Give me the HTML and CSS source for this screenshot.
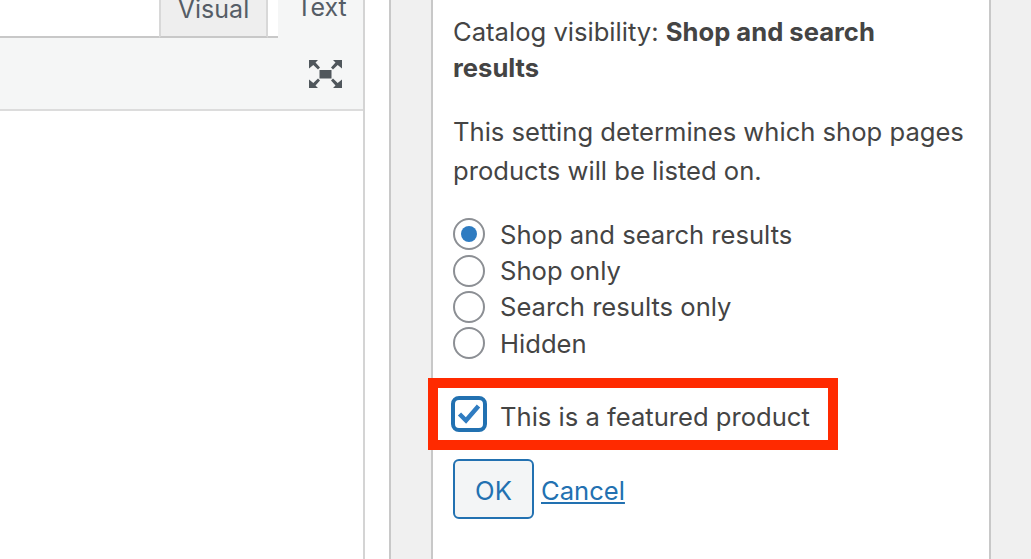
FILE: index.html
```
<!DOCTYPE html>
<html lang="en">
<head>
<meta charset="utf-8">
<title>Catalog visibility</title>
<link rel="stylesheet" href="styles.css">
</head>
<body>
<div class="page">
  <section class="editor">
    <div class="tabs">
      <div class="tab tab-visual">Visual</div>
      <div class="tab tab-text">Text</div>
    </div>
    <div class="toolbar">
      <svg class="fullscreen" width="33" height="29" viewBox="0 0 33 29" aria-hidden="true">
        <rect x="10.500" y="10" width="12" height="8.500" fill="#50575c"/>
        <path d="M0 0h9L6.500 2.500 11 7.500 9 9.500 4.300 5 0 8.500z" fill="#50575c"/>
        <path d="M33 0h-9l2.500 2.500L22 7.500l2 2L28.700 5 33 8.500z" fill="#50575c"/>
        <path d="M0 28h9l-2.500-2.500L11 20.500l-2-2L4.300 23 0 19.500z" fill="#50575c"/>
        <path d="M33 28h-9l2.500-2.500L22 20.500l2-2L28.700 23 33 19.500z" fill="#50575c"/>
      </svg>
    </div>
    <div class="content"></div>
  </section>
  <div class="gutter"></div>
  <aside class="side">
    <div class="box">
      <p class="current">Catalog visibility: <strong>Shop and search results</strong></p>
      <p class="help">This setting determines which shop pages products will be listed on.</p>
      <ul class="options">
        <li class="option"><span class="radio radio-on"></span>Shop and search results</li>
        <li class="option"><span class="radio"></span>Shop only</li>
        <li class="option"><span class="radio"></span>Search results only</li>
        <li class="option"><span class="radio"></span>Hidden</li>
      </ul>
      <div class="featured">
        <span class="check">
          <svg width="28" height="28" viewBox="0 0 28 28" aria-hidden="true"><path d="M4.500 14L11 20.500 23.500 6" fill="none" stroke="#2f7cc1" stroke-width="4.500"/></svg>
        </span>
        <span class="featured-label">This is a featured product</span>
      </div>
      <div class="actions">
        <button class="ok" type="button">OK</button>
        <a class="cancel" href="#">Cancel</a>
      </div>
    </div>
  </aside>
</div>
</body>
</html>
```

FILE: styles.css
```
* { box-sizing: border-box; }
html, body { margin: 0; height: 100%; overflow: hidden; }
body {
  background: #f0f0f0;
  color: #444;
  font-family: "Inter", "Liberation Sans", sans-serif;
  font-size: 25.600px;
}
.page { display: flex; height: 559px; width: 1031px; overflow: hidden; }

.editor {
  width: 365px;
  flex: none;
  display: flex;
  flex-direction: column;
  background: #fff;
  border-right: 2px solid #d4d4d4;
}
.tabs {
  height: 38px;
  flex: none;
  display: flex;
  justify-content: flex-end;
  align-items: flex-end;
  border-bottom: 2px solid #c8c8c8;
}
.tab {
  height: 49px;
  color: #555d66;
  font-size: 25px;
  line-height: 36px;
  text-align: center;
  flex: none;
}
.tab-visual {
  width: 109px;
  margin-bottom: -2px;
  background: #eeeeee;
  border: 2px solid #d8d8d8;
  border-bottom: 2px solid #c8c8c8;
}
.tab-text {
  width: 85px;
  margin-left: 10px;
  margin-bottom: -2px;
  background: #f5f6f6;
  padding-left: 2px;
}
.toolbar {
  height: 73px;
  flex: none;
  display: flex;
  justify-content: flex-end;
  align-items: center;
  padding-right: 21px;
  background: #f5f6f6;
  border-bottom: 2px solid #dcdcdc;
}
.fullscreen { display: block; margin-top: 1px; }
.content { flex: 1; background: #fff; }

.gutter {
  width: 26px;
  flex: none;
  background: #fff;
  border-right: 2px solid #c8c8c8;
}
.side { flex: 1; padding-left: 40px; }

.box {
  width: 560px;
  height: 559px;
  background: #fff;
  border-left: 2px solid #c8c8c8;
  border-right: 2px solid #c8c8c8;
  padding: 14px 20px 0 20px;
}
.current { margin: 0; max-width: 500px; line-height: 36px; }
.current strong { font-weight: 700; }
.help { margin: 26px 0 0; line-height: 39px; }

.options { list-style: none; margin: 26px 0 0; padding: 0; }
.option {
  display: flex;
  align-items: center;
  height: 36.400px;
  gap: 15px;
}
.radio {
  width: 32px;
  height: 32px;
  flex: none;
  border: 2px solid #8c8f94;
  border-radius: 50%;
  background: #fff;
  display: flex;
  align-items: center;
  justify-content: center;
}
.radio-on::before {
  content: "";
  width: 16px;
  height: 16px;
  border-radius: 50%;
  background: #2f7cc1;
}

.featured {
  width: 410px;
  height: 72px;
  margin: 16px 0 0 -25px;
  border: 10px solid #ff2a00;
  display: flex;
  align-items: center;
  gap: 13px;
  padding-left: 13px;
}
.featured-label { padding-top: 5px; }
.check {
  width: 36px;
  height: 36px;
  flex: none;
  border: 4px solid #2271b1;
  border-radius: 8px;
  display: flex;
  align-items: center;
  justify-content: center;
}
.actions {
  display: flex;
  align-items: center;
  gap: 7px;
  margin-top: 9px;
}
.ok {
  width: 81px;
  height: 60px;
  padding: 3px 0 0;
  background: #f3f5f6;
  color: #2271b1;
  border: 2px solid #2271b1;
  border-radius: 6px;
  font: inherit;
}
.cancel { color: #2271b1; text-decoration: underline; padding-top: 4px; }
```
